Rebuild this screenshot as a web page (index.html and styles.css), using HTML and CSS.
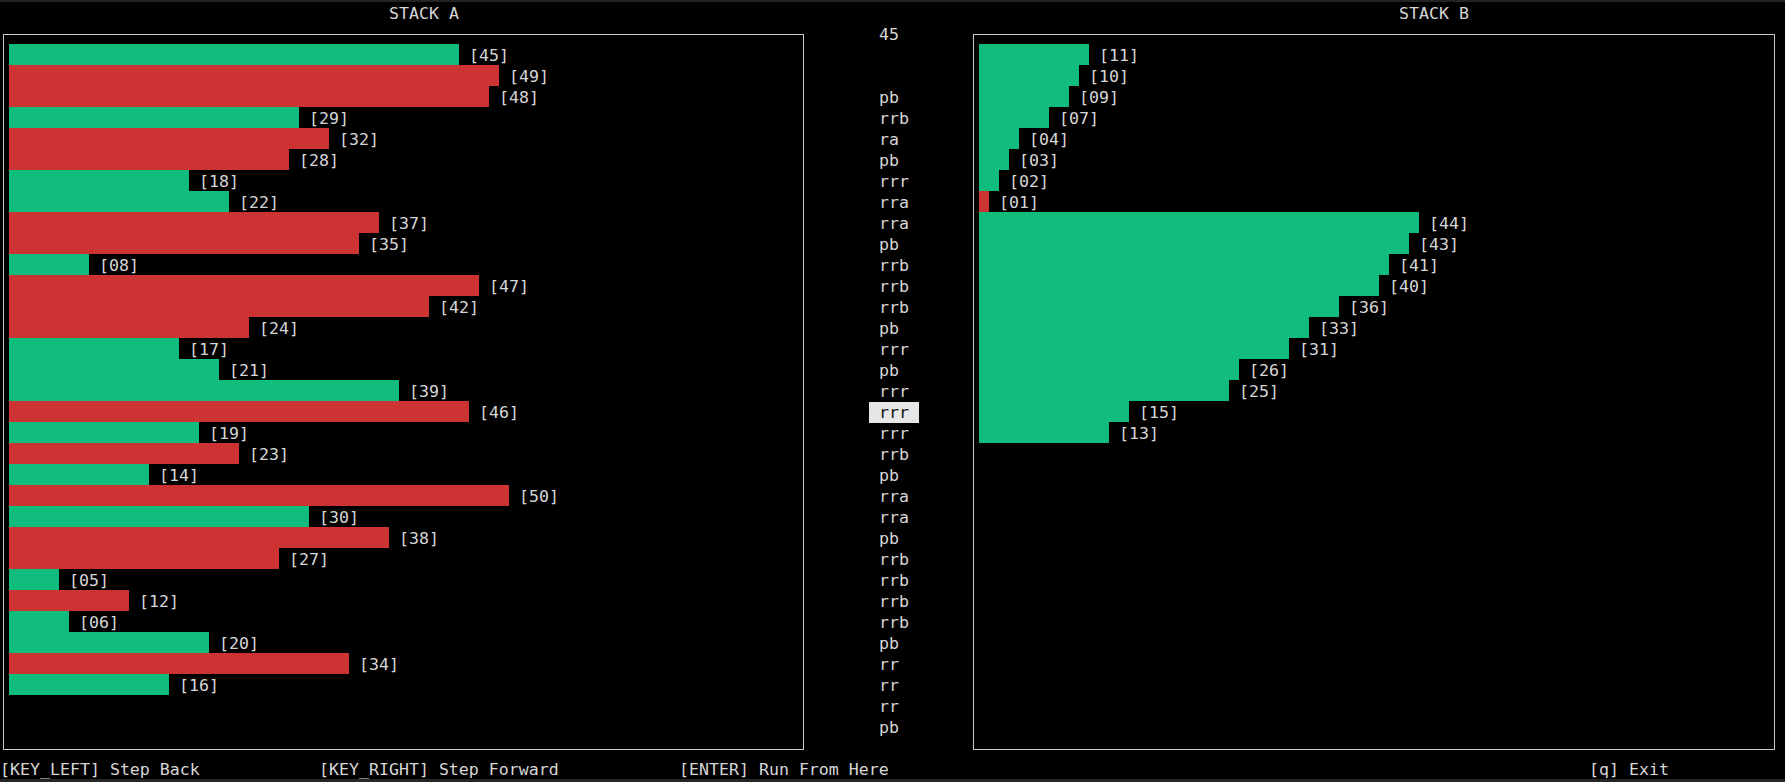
FILE: index.html
```html
<!DOCTYPE html>
<html lang="en">
<head>
<meta charset="utf-8">
<title>push_swap visualizer</title>
<link rel="stylesheet" href="styles.css">
</head>
<body>
<div class="screen">
  <div class="strip strip-top"></div>
  <div class="header">
    <div class="title title-a">STACK A</div>
    <div></div>
    <div class="title title-b">STACK B</div>
  </div>
  <div class="main">
    <div class="stack stack-a">
      <div class="row"><span class="bar green" style="width:450px"></span><span class="label">[45]</span></div>
      <div class="row"><span class="bar red" style="width:490px"></span><span class="label">[49]</span></div>
      <div class="row"><span class="bar red" style="width:480px"></span><span class="label">[48]</span></div>
      <div class="row"><span class="bar green" style="width:290px"></span><span class="label">[29]</span></div>
      <div class="row"><span class="bar red" style="width:320px"></span><span class="label">[32]</span></div>
      <div class="row"><span class="bar red" style="width:280px"></span><span class="label">[28]</span></div>
      <div class="row"><span class="bar green" style="width:180px"></span><span class="label">[18]</span></div>
      <div class="row"><span class="bar green" style="width:220px"></span><span class="label">[22]</span></div>
      <div class="row"><span class="bar red" style="width:370px"></span><span class="label">[37]</span></div>
      <div class="row"><span class="bar red" style="width:350px"></span><span class="label">[35]</span></div>
      <div class="row"><span class="bar green" style="width:80px"></span><span class="label">[08]</span></div>
      <div class="row"><span class="bar red" style="width:470px"></span><span class="label">[47]</span></div>
      <div class="row"><span class="bar red" style="width:420px"></span><span class="label">[42]</span></div>
      <div class="row"><span class="bar red" style="width:240px"></span><span class="label">[24]</span></div>
      <div class="row"><span class="bar green" style="width:170px"></span><span class="label">[17]</span></div>
      <div class="row"><span class="bar green" style="width:210px"></span><span class="label">[21]</span></div>
      <div class="row"><span class="bar green" style="width:390px"></span><span class="label">[39]</span></div>
      <div class="row"><span class="bar red" style="width:460px"></span><span class="label">[46]</span></div>
      <div class="row"><span class="bar green" style="width:190px"></span><span class="label">[19]</span></div>
      <div class="row"><span class="bar red" style="width:230px"></span><span class="label">[23]</span></div>
      <div class="row"><span class="bar green" style="width:140px"></span><span class="label">[14]</span></div>
      <div class="row"><span class="bar red" style="width:500px"></span><span class="label">[50]</span></div>
      <div class="row"><span class="bar green" style="width:300px"></span><span class="label">[30]</span></div>
      <div class="row"><span class="bar red" style="width:380px"></span><span class="label">[38]</span></div>
      <div class="row"><span class="bar red" style="width:270px"></span><span class="label">[27]</span></div>
      <div class="row"><span class="bar green" style="width:50px"></span><span class="label">[05]</span></div>
      <div class="row"><span class="bar red" style="width:120px"></span><span class="label">[12]</span></div>
      <div class="row"><span class="bar green" style="width:60px"></span><span class="label">[06]</span></div>
      <div class="row"><span class="bar green" style="width:200px"></span><span class="label">[20]</span></div>
      <div class="row"><span class="bar red" style="width:340px"></span><span class="label">[34]</span></div>
      <div class="row"><span class="bar green" style="width:160px"></span><span class="label">[16]</span></div>
    </div>
    <div class="ops">
      <div class="count">45</div>
      <div class="op-list">
        <div class="op">pb</div>
        <div class="op">rrb</div>
        <div class="op">ra</div>
        <div class="op">pb</div>
        <div class="op">rrr</div>
        <div class="op">rra</div>
        <div class="op">rra</div>
        <div class="op">pb</div>
        <div class="op">rrb</div>
        <div class="op">rrb</div>
        <div class="op">rrb</div>
        <div class="op">pb</div>
        <div class="op">rrr</div>
        <div class="op">pb</div>
        <div class="op">rrr</div>
        <div class="op"><span class="current">rrr</span></div>
        <div class="op">rrr</div>
        <div class="op">rrb</div>
        <div class="op">pb</div>
        <div class="op">rra</div>
        <div class="op">rra</div>
        <div class="op">pb</div>
        <div class="op">rrb</div>
        <div class="op">rrb</div>
        <div class="op">rrb</div>
        <div class="op">rrb</div>
        <div class="op">pb</div>
        <div class="op">rr</div>
        <div class="op">rr</div>
        <div class="op">rr</div>
        <div class="op">pb</div>
      </div>
    </div>
    <div class="stack stack-b">
      <div class="row"><span class="bar green" style="width:110px"></span><span class="label">[11]</span></div>
      <div class="row"><span class="bar green" style="width:100px"></span><span class="label">[10]</span></div>
      <div class="row"><span class="bar green" style="width:90px"></span><span class="label">[09]</span></div>
      <div class="row"><span class="bar green" style="width:70px"></span><span class="label">[07]</span></div>
      <div class="row"><span class="bar green" style="width:40px"></span><span class="label">[04]</span></div>
      <div class="row"><span class="bar green" style="width:30px"></span><span class="label">[03]</span></div>
      <div class="row"><span class="bar green" style="width:20px"></span><span class="label">[02]</span></div>
      <div class="row"><span class="bar red" style="width:10px"></span><span class="label">[01]</span></div>
      <div class="row"><span class="bar green" style="width:440px"></span><span class="label">[44]</span></div>
      <div class="row"><span class="bar green" style="width:430px"></span><span class="label">[43]</span></div>
      <div class="row"><span class="bar green" style="width:410px"></span><span class="label">[41]</span></div>
      <div class="row"><span class="bar green" style="width:400px"></span><span class="label">[40]</span></div>
      <div class="row"><span class="bar green" style="width:360px"></span><span class="label">[36]</span></div>
      <div class="row"><span class="bar green" style="width:330px"></span><span class="label">[33]</span></div>
      <div class="row"><span class="bar green" style="width:310px"></span><span class="label">[31]</span></div>
      <div class="row"><span class="bar green" style="width:260px"></span><span class="label">[26]</span></div>
      <div class="row"><span class="bar green" style="width:250px"></span><span class="label">[25]</span></div>
      <div class="row"><span class="bar green" style="width:150px"></span><span class="label">[15]</span></div>
      <div class="row"><span class="bar green" style="width:130px"></span><span class="label">[13]</span></div>
    </div>
  </div>
  <div class="footer">
    <span class="key">[KEY_LEFT] Step Back</span>
    <span class="key">[KEY_RIGHT] Step Forward</span>
    <span class="key">[ENTER] Run From Here</span>
    <span class="key">[q] Exit</span>
  </div>
  <div class="strip strip-bottom"></div>
</div>
</body>
</html>
```

FILE: styles.css
```css
html, body {
  margin: 0;
  padding: 0;
  background: #000;
}

.screen {
  width: 1785px;
  height: 782px;
  overflow: hidden;
  background: #000;
  color: #d6d6d6;
  font-family: "DejaVu Sans Mono", "Liberation Mono", monospace;
  font-size: 16.6px;
  line-height: 23px;
}

.strip-top {
  height: 2px;
  background: #232323;
}

.strip-bottom {
  height: 3px;
  background: #262626;
}

.header,
.main {
  display: grid;
  grid-template-columns: 801px 169px 802px;
  padding-left: 3px;
}

.header {
  height: 21px;
}

.title {
  height: 21px;
  white-space: pre;
}

.title-a {
  padding-left: 386px;
}

.title-b {
  padding-left: 426px;
}

.main {
  height: 735px;
  align-items: start;
}

.stack {
  margin-top: 11px;
  height: 716px;
  box-sizing: border-box;
  border: 1px solid #c9c9c9;
  padding: 9px 0 0 5px;
}

.row {
  display: flex;
  align-items: flex-start;
  height: 21px;
}

.bar {
  display: block;
  height: 21px;
  flex: none;
}

.green {
  background: #10bd7c;
}

.red {
  background: #cd3333;
}

.label {
  margin-left: 10px;
  height: 21px;
  white-space: pre;
}

.ops {
  padding-left: 75px;
}

.count {
  height: 21px;
}

.op-list {
  margin-top: 42px;
}

.op {
  height: 21px;
}

.current {
  display: inline-block;
  height: 21px;
  margin-left: -10px;
  padding: 0 10px;
  background: #e6e6e6;
  color: #111;
  line-height: 22px;
}

.footer {
  display: grid;
  grid-template-columns: 319px 360px 910px auto;
  height: 21px;
  white-space: pre;
}
```
